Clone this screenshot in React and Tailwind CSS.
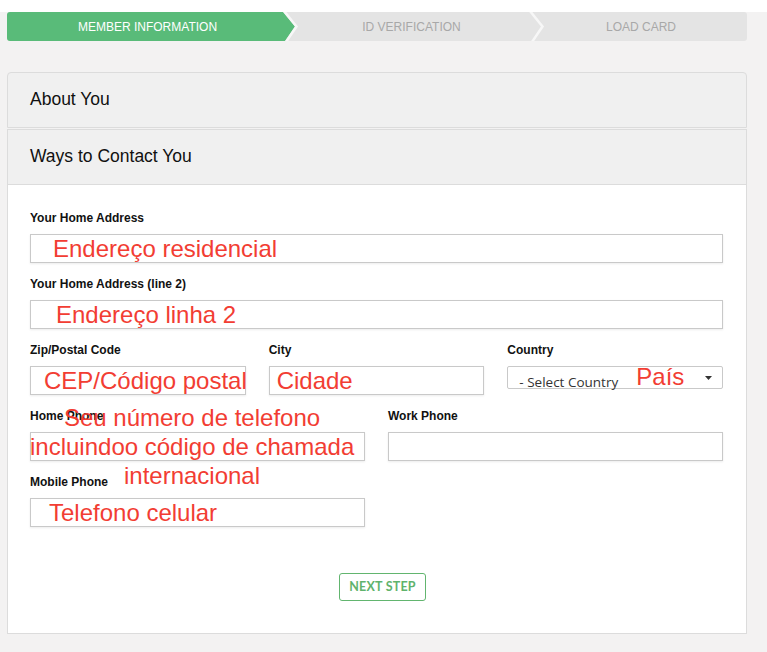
import React from "react";

const red = "text-[#f23d33] text-[24px] leading-[29px] font-['Liberation_Sans',Arial,sans-serif] whitespace-nowrap";

const Label = ({ children }) => (
	<div className="h-[16px] mb-[8px] text-[12px] leading-[16px] font-bold text-[#111]">
		{children}
	</div>
);

const Box = ({ children, pad = "pl-[22px]" }) => (
	<div
		className={`h-[29px] border border-[#c9c9c9] bg-white shadow-[0_1px_2px_rgba(0,0,0,0.08)] flex items-center ${pad}`}
	>
		{children && <span className={red}>{children}</span>}
	</div>
);

const Stepper = () => (
	<div className="ml-[7px] mr-[20px] mt-[12px] h-[29px] relative rounded-[3px] overflow-hidden bg-[#e4e4e4]">
		<svg
			className="absolute inset-0"
			width="740"
			height="29"
			viewBox="0 0 740 29"
		>
			<path d="M0 0 H276 L288 14.5 L278 29 H0 Z" fill="#59bb79" />
			<polyline
				points="277,-1 289.5,14.5 279,30"
				fill="none"
				stroke="#f7f7f7"
				strokeWidth="2.5"
			/>
			<polyline
				points="523,-1 535.5,14.5 525,30"
				fill="none"
				stroke="#f7f7f7"
				strokeWidth="2.5"
			/>
		</svg>
		<div className="relative flex h-full items-center text-[12px] font-['Liberation_Sans',Arial,sans-serif]">
			<div className="w-[281px] text-center text-white">MEMBER INFORMATION</div>
			<div className="w-[247px] text-center text-[#a8a8a8]">ID VERIFICATION</div>
			<div className="w-[212px] text-center text-[#a8a8a8]">LOAD CARD</div>
		</div>
	</div>
);

export default function App() {
	return (
		<div className="min-h-[652px] bg-[#f3f2f2] pb-[18px] font-['Liberation_Sans',Arial,sans-serif]">
			<Stepper />

			<div className="ml-[7px] mr-[20px] mt-[31px]">
				<div className="h-[56px] border border-[#dcdcdc] rounded-t-[4px] bg-[#f0f0f0] flex items-center pl-[22px] pb-[2px] text-[17.5px] text-[#111]">
					About You
				</div>

				<div className="mt-[1px] border border-[#dcdcdc] bg-white">
					<div className="h-[55px] border-b border-[#dcdcdc] bg-[#f0f0f0] flex items-center pl-[22px] pb-[2px] text-[17.5px] text-[#111]">
						Ways to Contact You
					</div>

					<div className="pl-[22px] pr-[23px] pt-[25px] pb-[32px]">
						<Label>Your Home Address</Label>
						<Box>Endereço residencial</Box>

						<div className="mt-[13px]">
							<Label>Your Home Address (line 2)</Label>
							<Box pad="pl-[25px]">Endereço linha 2</Box>
						</div>

						<div className="mt-[13px] grid grid-cols-3 gap-x-[23px]">
							<div>
								<Label>Zip/Postal Code</Label>
								<Box pad="pl-[13px]">CEP/Código postal</Box>
							</div>
							<div>
								<Label>City</Label>
								<Box pad="pl-[7px]">Cidade</Box>
							</div>
							<div>
								<Label>Country</Label>
								<div className="relative h-[23px] border border-[#c9c9c9] rounded-[2px] bg-white flex items-end pl-[11px] pr-[10px]">
									<span className="relative top-[3px] text-[13.5px] leading-[18px] text-[#333] font-['Open_Sans',sans-serif]">
										- Select Country
									</span>
									<span className={`absolute left-[128px] top-[-5px] ${red}`}>País</span>
									<svg className="ml-auto mb-[8px]" width="7" height="4" viewBox="0 0 7 4">
										<path d="M0 0 H7 L3.5 4 Z" fill="#333" />
									</svg>
								</div>
							</div>
						</div>

						<div className="mt-[13px] grid grid-cols-2 gap-x-[23px]">
							<div className="relative">
								<Label>Home Phone</Label>
								<Box />
								<div className={`absolute left-0 top-[-5px] w-[324px] text-center ${red}`}>
									Seu número de telefono
									<br />
									incluindoo código de chamada
									<br />
									internacional
								</div>
							</div>
							<div>
								<Label>Work Phone</Label>
								<Box />
							</div>
						</div>

						<div className="mt-[13px] grid grid-cols-2 gap-x-[23px]">
							<div>
								<Label>Mobile Phone</Label>
								<Box pad="pl-[18px]">Telefono celular</Box>
							</div>
						</div>

						<div className="mt-[46px] pl-[309px]">
							<button className="h-[28px] w-[87px] border border-[#62b56f] rounded-[3px] bg-white text-[12.5px] font-bold text-[#5fb36c] font-['Lato','Open_Sans',sans-serif] tracking-[0.2px]">
								NEXT STEP
							</button>
						</div>
					</div>
				</div>
			</div>
		</div>
	);
}
